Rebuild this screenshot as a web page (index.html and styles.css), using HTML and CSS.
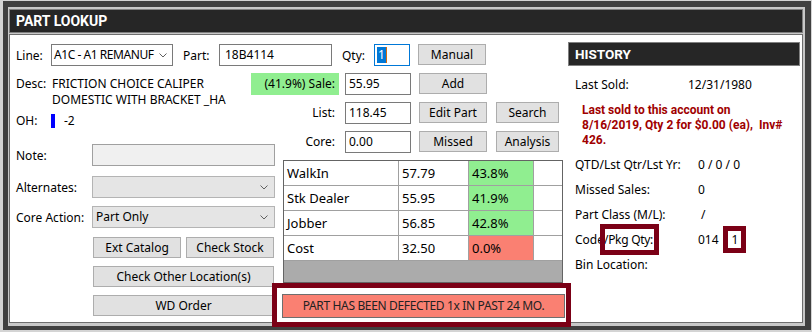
FILE: index.html
```html
<!DOCTYPE html>
<html lang="en">
<head>
  <meta charset="UTF-8">
  <title>Part Lookup</title>
  <link rel="stylesheet" href="styles.css">
</head>
<body>

  <div class="frame">
    <div class="titlebar">PART LOOKUP</div>

    <div class="panel">
      <div class="lookup">
        <div class="row-top">
          <span class="lbl lbl-line">Line:</span>
          <div class="select select-line">
            <span class="select-text">A1C - A1 REMANUF</span>
            <svg class="chev" width="8" height="5" viewBox="0 0 8 5"><polyline points="0.5,0.5 4,4 7.5,0.5" /></svg>
          </div>
          <span class="lbl lbl-part">Part:</span>
          <div class="field field-part">18B4114</div>
          <span class="lbl lbl-qty">Qty:</span>
          <div class="field field-qty"><span class="selected">1</span><span class="caret"></span></div>
          <button class="btn btn-manual">Manual</button>
        </div>

        <div class="main">
          <div class="left">
            <div class="desc">
              <span class="lbl lbl-desc">Desc:</span>
              <div class="desc-text">FRICTION CHOICE CALIPER<br>DOMESTIC WITH BRACKET _HA</div>
            </div>
            <div class="oh">
              <span class="lbl lbl-oh">OH:</span>
              <span class="oh-bar"></span>
              <span>-2</span>
            </div>

            <div class="form-row row-note">
              <span class="lbl lbl-form">Note:</span>
              <div class="field field-note"></div>
            </div>
            <div class="form-row row-alt">
              <span class="lbl lbl-form">Alternates:</span>
              <div class="select select-form">
                <span></span>
                <svg class="chev" width="8" height="5" viewBox="0 0 8 5"><polyline points="0.5,0.5 4,4 7.5,0.5" /></svg>
              </div>
            </div>
            <div class="form-row row-core">
              <span class="lbl lbl-form">Core Action:</span>
              <div class="select select-form">
                <span>Part Only</span>
                <svg class="chev" width="8" height="5" viewBox="0 0 8 5"><polyline points="0.5,0.5 4,4 7.5,0.5" /></svg>
              </div>
            </div>

            <div class="btn-row btn-row-first">
              <button class="btn btn-half">Ext Catalog</button>
              <button class="btn btn-half">Check Stock</button>
            </div>
            <div class="btn-row">
              <button class="btn btn-full">Check Other Location(s)</button>
            </div>
            <div class="btn-row">
              <button class="btn btn-full">WD Order</button>
            </div>
          </div>

          <div class="right">
            <div class="price-row">
              <span class="plbl plbl-sale">(41.9%) Sale:</span>
              <div class="field field-price">55.95</div>
              <button class="btn btn-act">Add</button>
            </div>
            <div class="price-row">
              <span class="plbl">List:</span>
              <div class="field field-price">118.45</div>
              <button class="btn btn-act">Edit Part</button>
              <button class="btn btn-side">Search</button>
            </div>
            <div class="price-row">
              <span class="plbl">Core:</span>
              <div class="field field-price">0.00</div>
              <button class="btn btn-act">Missed</button>
              <button class="btn btn-side">Analysis</button>
            </div>

            <div class="levels">
              <div class="level">
                <span>WalkIn</span><span>57.79</span><span class="pct good">43.8%</span><span></span>
              </div>
              <div class="level">
                <span>Stk Dealer</span><span>55.95</span><span class="pct good">41.9%</span><span></span>
              </div>
              <div class="level">
                <span>Jobber</span><span>56.85</span><span class="pct good">42.8%</span><span></span>
              </div>
              <div class="level">
                <span>Cost</span><span>32.50</span><span class="pct bad">0.0%</span><span></span>
              </div>
            </div>

            <div class="defect-mark">
              <div class="defect">PART HAS BEEN DEFECTED 1x IN PAST 24 MO.</div>
            </div>
          </div>
        </div>
      </div>

      <div class="history">
        <div class="history-title">HISTORY</div>
        <div class="hist-sold">
          <span class="hlbl hlbl-sold">Last Sold:</span>
          <span>12/31/1980</span>
        </div>
        <div class="hist-note">
          Last sold to this account on<br>
          8/16/2019, Qty 2 for $0.00 (ea),&nbsp; Inv#<br>
          426.
        </div>
        <div class="hist-rows">
          <div class="hist-row"><span class="hlbl">QTD/Lst Qtr/Lst Yr:</span><span>0 / 0 / 0</span></div>
          <div class="hist-row"><span class="hlbl">Missed Sales:</span><span>0</span></div>
          <div class="hist-row"><span class="hlbl">Part Class (M/L):</span><span>&nbsp;/</span></div>
          <div class="hist-row">
            <span class="hlbl">Code<span class="mark mark-pkg">/Pkg Qty:</span></span>
            <span>014</span>
            <span class="mark mark-qty">1</span>
          </div>
          <div class="hist-row"><span class="hlbl">Bin Location:</span><span></span></div>
        </div>
      </div>
    </div>
  </div>

</body>
</html>
```

FILE: styles.css
```css
body {
  margin: 0;
  background-color: #d4d4d4;
  font-family: "Noto Sans", "Open Sans", sans-serif;
  font-size: 12px;
  line-height: 15px;
  color: #000;
}

.frame {
  margin: 1px 1px 0 3px;
  border-style: solid;
  border-color: #404040;
  border-width: 6px 6px 4px 5px;
  padding: 2px 2px 3px 1px;
  background-color: #c8c8c8;
}

.titlebar,
.history-title {
  height: 22px;
  border: 1px solid #808080;
  background-color: #262626;
  color: #fff;
  font-family: Roboto, "Noto Sans", sans-serif;
  font-weight: bold;
  font-size: 14px;
  line-height: 22px;
  padding-left: 6px;
}

.panel {
  display: flex;
  height: 287px;
  margin-top: 1px;
  border: 1px solid #6e6e6e;
  background-color: #fff;
}

/* ---------- part lookup ---------- */

.lookup {
  width: 547px;
  padding: 9px 0 0 6px;
}

.lbl {
  flex: none;
}

.row-top {
  display: flex;
  align-items: center;
  height: 22px;
}

.lbl-line { width: 35px; }
.lbl-part { width: 36px; margin-left: 10px; }
.lbl-qty { width: 32px; margin-left: 10px; }

.field,
.select {
  box-sizing: border-box;
  height: 22px;
  border: 1px solid #7a7a7a;
  background-color: #fff;
  padding-left: 3px;
  line-height: 20px;
  white-space: nowrap;
}

.select {
  display: flex;
  align-items: center;
  justify-content: space-between;
  padding-right: 5px;
}

.select-text {
  letter-spacing: -0.45px;
}

.chev {
  flex: none;
  margin-left: 2px;
  fill: none;
  stroke: #606060;
  stroke-width: 1;
}

.select-line { width: 122px; padding-left: 2px; }
.field-part { width: 113px; padding-left: 5px; }

.field-qty {
  display: flex;
  align-items: center;
  width: 36px;
  padding-left: 2px;
  border-color: #0078d7;
}

.selected {
  background-color: #0078d7;
  color: #fff;
  line-height: 16px;
  padding: 0 1px;
}

.caret {
  width: 1px;
  height: 16px;
  background-color: #d36a10;
}

.btn {
  box-sizing: border-box;
  height: 21px;
  padding: 0;
  border: 1px solid #adadad;
  background-color: #e1e1e1;
  font: inherit;
  color: #000;
  text-align: center;
  white-space: nowrap;
}

.btn-manual {
  width: 68px;
  margin-left: 8px;
  align-self: flex-start;
}

.main {
  display: flex;
  margin-top: 7px;
}

.left {
  width: 259px;
  flex: none;
}

.desc {
  display: flex;
  padding-top: 3px;
  line-height: 16px;
}

.lbl-desc { width: 36px; }

.oh {
  display: flex;
  align-items: center;
  height: 15px;
  margin-top: 5px;
}

.lbl-oh { width: 35px; }

.oh-bar {
  width: 4px;
  height: 14px;
  margin-right: 9px;
  background-color: #0000ff;
}

.form-row {
  display: flex;
  align-items: center;
}

.row-note { margin-top: 16px; }
.row-alt { margin-top: 10px; }
.row-core { margin-top: 8px; }

.lbl-form { width: 76px; }

.field-note {
  width: 183px;
  border-color: #a0a0a0;
  background-color: #f0f0f0;
}

.select-form {
  width: 183px;
  border-color: #b4b4b4;
  background-color: #e5e5e5;
  padding-right: 6px;
}

.btn-row {
  display: flex;
  gap: 5px;
  margin: 8px 0 0 77px;
}

.btn-row-first { margin-top: 9px; }

.btn-half { width: 88px; }
.btn-full { width: 181px; }

.right {
  width: 281px;
  margin-left: 8px;
}

.price-row {
  display: flex;
  height: 22px;
  margin-bottom: 7px;
}

.plbl {
  box-sizing: border-box;
  width: 56px;
  padding-right: 4px;
  text-align: right;
  line-height: 22px;
}

.plbl-sale {
  width: 88px;
  margin-left: -32px;
  background-color: #90ee90;
}

.field-price {
  width: 66px;
  margin-left: 6px;
}

.btn-act { width: 68px; margin-left: 8px; }
.btn-side { width: 63px; margin-left: 9px; }

.levels {
  box-sizing: border-box;
  height: 123px;
  border: 1px solid #646464;
  background-color: #ababab;
  font-size: 13px;
}

.level {
  display: grid;
  grid-template-columns: 115px 70px 65px 1fr;
  height: 25px;
  background-color: #fff;
}

.level span {
  border-right: 1px solid #a0a0a0;
  border-bottom: 1px solid #a0a0a0;
  padding-left: 3px;
  line-height: 24px;
}

.level span:last-child {
  border-right: none;
}

.pct.good { background-color: #90ee90; }
.pct.bad { background-color: #fa8072; }

.defect-mark {
  box-sizing: border-box;
  height: 44px;
  margin: 0 -8px 0 -11px;
  border: 5px solid #7b0016;
  padding: 6px 1px 0 5px;
  background-color: #fff;
}

.defect {
  box-sizing: border-box;
  height: 24px;
  border: 1px solid #6e6e6e;
  background-color: #fa8072;
  color: #222;
  text-align: center;
  line-height: 22px;
  letter-spacing: -0.35px;
}

/* ---------- history ---------- */

.history {
  width: 232px;
  margin-left: 5px;
  padding-top: 7px;
}

.history-title {
  font-size: 13.5px;
}

.hist-sold {
  display: flex;
  margin-top: 11px;
  padding-left: 7px;
}

.hlbl {
  flex: none;
  width: 123px;
}

.hlbl-sold { width: 113px; }

.hist-note {
  margin-top: 11px;
  padding-left: 14px;
  color: #a00000;
  font-family: Roboto, "Noto Sans", sans-serif;
  font-weight: bold;
  white-space: nowrap;
}

.hist-rows {
  margin-top: 4px;
  padding-left: 7px;
}

.hist-row {
  display: flex;
  align-items: center;
  height: 25px;
}

.mark {
  position: relative;
}

.mark::after {
  content: "";
  position: absolute;
  border: 5px solid #7b0016;
}

.mark-pkg {
  letter-spacing: -0.3px;
}

.mark-pkg::after {
  left: -4px;
  right: -6px;
  top: -7px;
  bottom: -7px;
}

.mark-qty {
  margin-left: 13px;
}

.mark-qty::after {
  left: -9px;
  right: -8px;
  top: -6px;
  bottom: -6px;
}
```
